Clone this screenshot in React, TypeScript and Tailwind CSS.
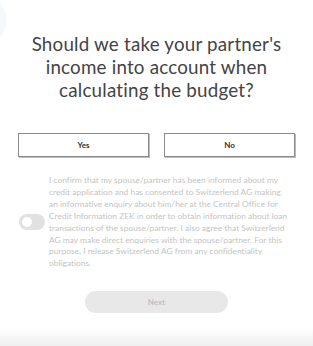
const lines = [
  "I confirm that my spouse/partner has been informed about my",
  "credit application and has consented to Switzerlend AG making",
  "an informative enquiry about him/her at the Central Office for",
  "Credit Information ZEK in order to obtain information about loan",
  "transactions of the spouse/partner. I also agree that Switzerlend",
  "AG may make direct enquiries with the spouse/partner. For this",
  "purpose, I release Switzerlend AG from any confidentiality",
  "obligations.",
];

export default function App() {
  return (
    <div
      className="relative w-[313px] h-[346px] overflow-hidden bg-white"
      style={{ fontFamily: "Lato, 'Open Sans', sans-serif" }}
    >
      <div className="absolute -left-[40px] top-[-5px] w-[46px] h-[50px] rounded-full bg-[#f3f8fc]" />
      <div className="flex flex-col items-center pt-[32px]">
        <h1 className="text-[18.8px] leading-[23px] text-[#444] text-center font-normal tracking-[0.2px]">
          Should we take your partner's
          <br />
          income into account when
          <br />
          calculating the budget?
        </h1>
      </div>
      <div className="flex gap-[15px] px-[18px] mt-[32px]">
        <button className="flex-1 h-[24px] border border-[#8a8a8a] shadow-[1px_1px_0_#bbb] bg-white text-[8px] font-bold text-[#333]">
          Yes
        </button>
        <button className="flex-1 h-[24px] border border-[#8a8a8a] shadow-[1px_1px_0_#bbb] bg-white text-[8px] font-bold text-[#333]">
          No
        </button>
      </div>
      <div className="flex items-center mt-[18px] pl-[19px]">
        <div className="shrink-0 -mt-[2px] w-[26px] h-[16px] rounded-full bg-[#e1e1e1] flex items-center pl-[3px]">
          <div className="w-[10px] h-[10px] rounded-full bg-white" />
        </div>
        <p className="ml-[4px] text-[8.4px] leading-[11.9px] tracking-[0.02px] text-[#c4c4c4] whitespace-nowrap">
          {lines.map((l, i) => (
            <span key={i} className="block">
              {l}
            </span>
          ))}
        </p>
      </div>
      <div className="flex justify-center mt-[21px]">
        <button className="w-[143px] h-[22px] rounded-full bg-[#e8e8e8] text-[8px] font-bold text-[#c0c0c0]">
          Next
        </button>
      </div>
      <div className="absolute left-0 right-0 bottom-0 h-[18px] bg-gradient-to-b from-white to-[#efefef]" />
    </div>
  );
}
